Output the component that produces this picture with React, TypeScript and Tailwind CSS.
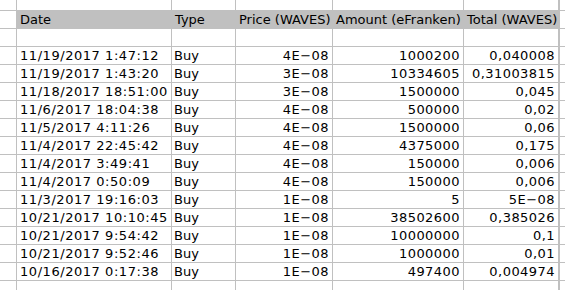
import React from 'react'

const rows: [string, string, string, string, string][] = [
  ['11/19/2017 1:47:12', 'Buy', '4E\u221208', '1000200', '0,040008'],
  ['11/19/2017 1:43:20', 'Buy', '3E\u221208', '10334605', '0,31003815'],
  ['11/18/2017 18:51:00', 'Buy', '3E\u221208', '1500000', '0,045'],
  ['11/6/2017 18:04:38', 'Buy', '4E\u221208', '500000', '0,02'],
  ['11/5/2017 4:11:26', 'Buy', '4E\u221208', '1500000', '0,06'],
  ['11/4/2017 22:45:42', 'Buy', '4E\u221208', '4375000', '0,175'],
  ['11/4/2017 3:49:41', 'Buy', '4E\u221208', '150000', '0,006'],
  ['11/4/2017 0:50:09', 'Buy', '4E\u221208', '150000', '0,006'],
  ['11/3/2017 19:16:03', 'Buy', '1E\u221208', '5', '5E\u221208'],
  ['10/21/2017 10:10:45', 'Buy', '1E\u221208', '38502600', '0,385026'],
  ['10/21/2017 9:54:42', 'Buy', '1E\u221208', '10000000', '0,1'],
  ['10/21/2017 9:52:46', 'Buy', '1E\u221208', '1000000', '0,01'],
  ['10/16/2017 0:17:38', 'Buy', '1E\u221208', '497400', '0,004974'],
]

// column widths incl. the 1px right grid line
const W = ['w-[17px]', 'w-[155px]', 'w-[64px]', 'w-[97px]', 'w-[131px]', 'w-[95px]']

function Row({ cells, header, h = 'h-[18px]' }: { cells: string[]; header?: boolean; h?: string }) {
  return (
    <div className={`flex ${h} shrink-0 border-b border-[#c0c0c0]`}>
      <div className={`${W[0]} shrink-0 border-r border-[#c0c0c0]`} />
      {header ? (
        <div className="flex bg-[#c0c0c0]">
          {cells.map((c, i) => (
            <div key={i} className={`${W[i + 1]} shrink-0 whitespace-nowrap pl-[3px] leading-[17px]`}>{c}</div>
          ))}
        </div>
      ) : (
        cells.map((c, i) => (
          <div
            key={i}
            className={`${W[i + 1]} shrink-0 overflow-visible whitespace-nowrap border-r border-[#c0c0c0] leading-[17px] ${
              i >= 2 ? 'pr-[3px] text-right tracking-[0.45px]' : i === 0 ? 'pl-[3px] tracking-[0.55px]' : 'pl-[2px]'
            }`}
          >
            {c}
          </div>
        ))
      )}
      <div className="flex-1 border-l border-[#c0c0c0]" />
    </div>
  )
}

export default function App() {
  const blank = ['', '', '', '', '']
  return (
    <div className="flex h-[290px] w-[565px] flex-col overflow-hidden bg-white text-[13px] text-black" style={{ fontFamily: '"DejaVu Sans", Verdana, sans-serif' }}>
      <Row cells={blank} h="h-[11px]" />
      <Row cells={['Date', 'Type', 'Price (WAVES)', 'Amount (eFranken)', 'Total (WAVES)']} header />
      <Row cells={blank} />
      {rows.map((r, i) => (
        <Row key={i} cells={r} />
      ))}
      <Row cells={blank} />
    </div>
  )
}
